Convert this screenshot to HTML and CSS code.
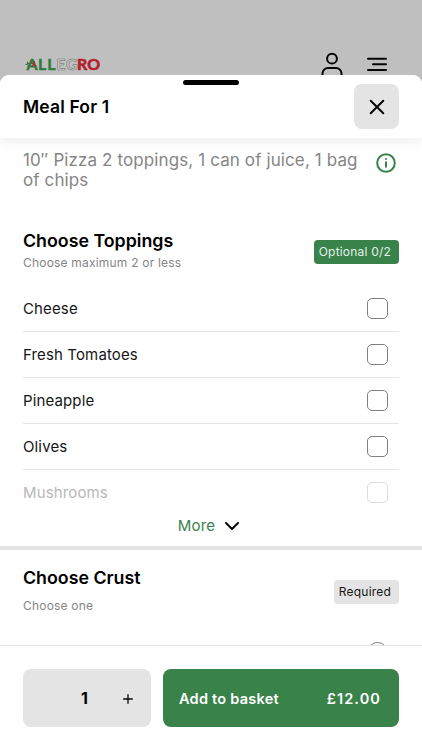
FILE: index.html
```html
<!DOCTYPE html>
<html lang="en">
<head>
    <meta charset="UTF-8">
    <meta name="viewport" content="width=device-width, initial-scale=1.0">
    <title>Allegro - Meal For 1</title>
    <link rel="stylesheet" href="styles.css">
</head>
<body>
    <header class="top-bar">
        <svg class="logo" width="78" height="20" viewBox="0 0 78 20">
            <text y="15.500" class="logo-text"><tspan x="2.500 14 23.300" class="green">ALL</tspan><tspan x="32.300 42" class="outline">EG</tspan><tspan x="53 63.300" class="red">RO</tspan></text>
            <path d="M7.500 9l4.500 3M8 12l2.500-4" stroke="#b5202c" stroke-width="1.300" />
            <path d="M2 10.500l3.500-1M3.500 8l1 5" stroke="#2f7a3c" stroke-width="1.200" />
        </svg>
        <svg class="user-icon" width="22" height="23" viewBox="0 0 22 23">
            <circle cx="11" cy="6.700" r="4.900" />
            <path d="M1.500 26v-4.500a5.500 5.500 0 0 1 5.500-5.500h8a5.500 5.500 0 0 1 5.500 5.500V26" />
        </svg>
        <svg class="menu-icon" width="20" height="16" viewBox="0 0 20 16">
            <path d="M1 2.700h18M6 8.300h13M1 14h18" />
        </svg>
    </header>

    <main class="sheet">
        <div class="sheet-header">
            <span class="handle"></span>
            <h1>Meal For 1</h1>
            <button class="close" aria-label="Close">
                <svg width="16" height="16" viewBox="0 0 16 16"><path d="M1.700 1.700l12.600 12.600M14.300 1.700l-12.600 12.600" /></svg>
            </button>
        </div>

        <div class="sheet-body">
            <div class="description">
                <p>10″ Pizza 2 toppings, 1 can of juice, 1 bag<br>of chips</p>
                <svg width="20" height="20" viewBox="0 0 20 20">
                    <circle cx="10" cy="10" r="8.800" />
                    <path d="M10 9.300v4.400M10 6v.1" />
                </svg>
            </div>

            <!-- Toppings -->
            <section class="group toppings">
                <div class="group-header">
                    <div>
                        <h2>Choose Toppings</h2>
                        <p>Choose maximum 2 or less</p>
                    </div>
                    <span class="badge optional">Optional 0/2</span>
                </div>
                <label class="option">Cheese<input type="checkbox"></label>
                <label class="option">Fresh Tomatoes<input type="checkbox"></label>
                <label class="option">Pineapple<input type="checkbox"></label>
                <label class="option">Olives<input type="checkbox"></label>
                <label class="option faded">Mushrooms<input type="checkbox"></label>
                <button class="more">More
                    <svg width="16" height="10" viewBox="0 0 16 10"><path d="M2 2l6 6 6-6" /></svg>
                </button>
            </section>

            <!-- Crust -->
            <section class="group crust">
                <div class="group-header">
                    <div>
                        <h2>Choose Crust</h2>
                        <p>Choose one</p>
                    </div>
                    <span class="badge">Required</span>
                </div>
                <div class="option"><input type="radio" name="crust" aria-label="Regular"></div>
            </section>
        </div>

        <footer class="basket-bar">
            <div class="quantity">
                <strong>1</strong>
                <svg width="10" height="10" viewBox="0 0 10 10"><path d="M5 .7v8.600M.7 5h8.600" /></svg>
            </div>
            <button class="add">
                <span class="add-label">Add to basket</span>
                <span class="price">£12.00</span>
            </button>
        </footer>
    </main>
</body>
</html>
```

FILE: styles.css
```css
* {
    margin: 0;
    padding: 0;
    box-sizing: border-box;
    font-family: Inter, "Liberation Sans", sans-serif;
}

body {
    height: 750px;
    display: flex;
    flex-direction: column;
    overflow: hidden;
    background-color: #bfbfbf;
}

svg {
    display: block;
    fill: none;
    stroke: #050505;
    stroke-width: 2;
    stroke-linecap: round;
    stroke-linejoin: round;
}

button {
    border: none;
    cursor: pointer;
}

.top-bar {
    height: 75px;
    padding: 52px 35px 0 24px;
    display: flex;
    align-items: flex-start;
    overflow: hidden;
}

.logo {
    margin-top: 2px;
    margin-right: auto;
}

.logo text,
.logo tspan {
    font-family: Lato, sans-serif;
    font-size: 16px;
    font-weight: 700;
}

.green {
    fill: #2f7a3c;
    stroke: #2f7a3c;
    stroke-width: 0.4;
}

.outline {
    fill: #c8c8c8;
    stroke: #858585;
    stroke-width: 0.7;
}

.red {
    fill: #b5202c;
    stroke: #b5202c;
    stroke-width: 0.6;
}

.user-icon {
    margin-right: 24px;
}

.menu-icon {
    margin-top: 4px;
}

.sheet {
    height: 675px;
    display: flex;
    flex-direction: column;
    background-color: white;
    border-radius: 9px 9px 0 0;
}

.sheet-header {
    position: relative;
    z-index: 1;
    flex: none;
    height: 63px;
    padding: 0 23px;
    display: flex;
    align-items: center;
    justify-content: space-between;
    background-color: white;
    border-radius: 9px 9px 0 0;
    box-shadow: 0 6px 10px rgba(0,0,0,0.05);
}

.handle {
    position: absolute;
    top: 5px;
    left: 183px;
    width: 56px;
    height: 5px;
    border-radius: 3px;
    background-color: #000;
}

h1 {
    font-size: 17.5px;
    font-weight: 600;
    letter-spacing: 0.15px;
}

.close {
    width: 45px;
    height: 45px;
    display: grid;
    place-items: center;
    border-radius: 8px;
    background-color: #e4e4e4;
}

.sheet-body {
    flex: 1;
    min-height: 0;
    overflow: hidden;
}

.description {
    height: 84px;
    padding: 12px 26px 0 23px;
    display: flex;
    justify-content: space-between;
    color: #858585;
    font-size: 17px;
    letter-spacing: 0.11px;
    line-height: 20px;
    white-space: nowrap;
}

.description svg {
    margin-top: 3px;
    stroke: #39824a;
}

.group {
    padding: 0 23px;
}

.toppings {
    height: 328px;
    border-bottom: 4px solid #e4e4e4;
}

.group-header {
    height: 64px;
    display: flex;
    justify-content: space-between;
    align-items: flex-start;
}

h2 {
    padding-top: 8px;
    font-size: 17.8px;
    font-weight: 600;
    line-height: 22px;
}

.group-header p {
    margin-top: 3px;
    color: #858585;
    font-size: 12px;
    letter-spacing: 0.2px;
    line-height: 16px;
}

.badge {
    height: 24px;
    margin-top: 18px;
    padding: 0 8px 0 5px;
    border-radius: 4px;
    background-color: #e4e4e4;
    color: #161616;
    font-size: 12px;
    letter-spacing: 0.2px;
    line-height: 24px;
}

.optional {
    background-color: #39824a;
    color: #e3f1e6;
}

.option {
    height: 46px;
    padding-right: 11px;
    display: flex;
    align-items: center;
    justify-content: space-between;
    border-bottom: 1px solid #e4e4e4;
    color: #161616;
    font-size: 15px;
    letter-spacing: 0.13px;
}

.option input {
    appearance: none;
    width: 21px;
    height: 21px;
    border: 1px solid #808080;
    border-radius: 5px;
    background-color: white;
}

.option input[type="radio"] {
    margin-left: auto;
    border-radius: 50%;
}

.faded {
    height: 45px;
    border: none;
    color: #b8b8b8;
}

.faded input {
    border-color: #dcdcdc;
}

.more {
    height: 20px;
    margin: 0 auto;
    padding-right: 4px;
    display: flex;
    align-items: center;
    gap: 9px;
    background: none;
    color: #39824a;
    font-size: 15px;
    letter-spacing: 0.2px;
}

.more svg {
    margin-top: 2px;
}

.crust .group-header {
    height: 79px;
}

.crust h2 {
    padding-top: 17px;
}

.crust .group-header p {
    margin-top: 9px;
}

.crust .badge {
    margin-top: 30px;
}

.crust .option {
    height: 47px;
}

.basket-bar {
    flex: none;
    height: 105px;
    padding: 23px 23px 0;
    display: flex;
    gap: 12px;
    border-top: 1px solid #e4e4e4;
    background-color: white;
}

.quantity {
    width: 128px;
    height: 58px;
    padding: 0 18px 0 58px;
    display: flex;
    align-items: center;
    justify-content: space-between;
    border-radius: 8px;
    background-color: #e4e4e4;
    font-size: 16px;
}

.quantity svg {
    margin-top: 1px;
    stroke-width: 1.3;
}

.add {
    flex: 1;
    height: 58px;
    padding: 0 18px 0 16px;
    display: flex;
    align-items: center;
    justify-content: space-between;
    border-radius: 8px;
    background-color: #39824a;
    color: white;
    font-size: 14.5px;
    font-weight: 600;
    letter-spacing: 0.25px;
}

.price {
    letter-spacing: 1.1px;
}
```
